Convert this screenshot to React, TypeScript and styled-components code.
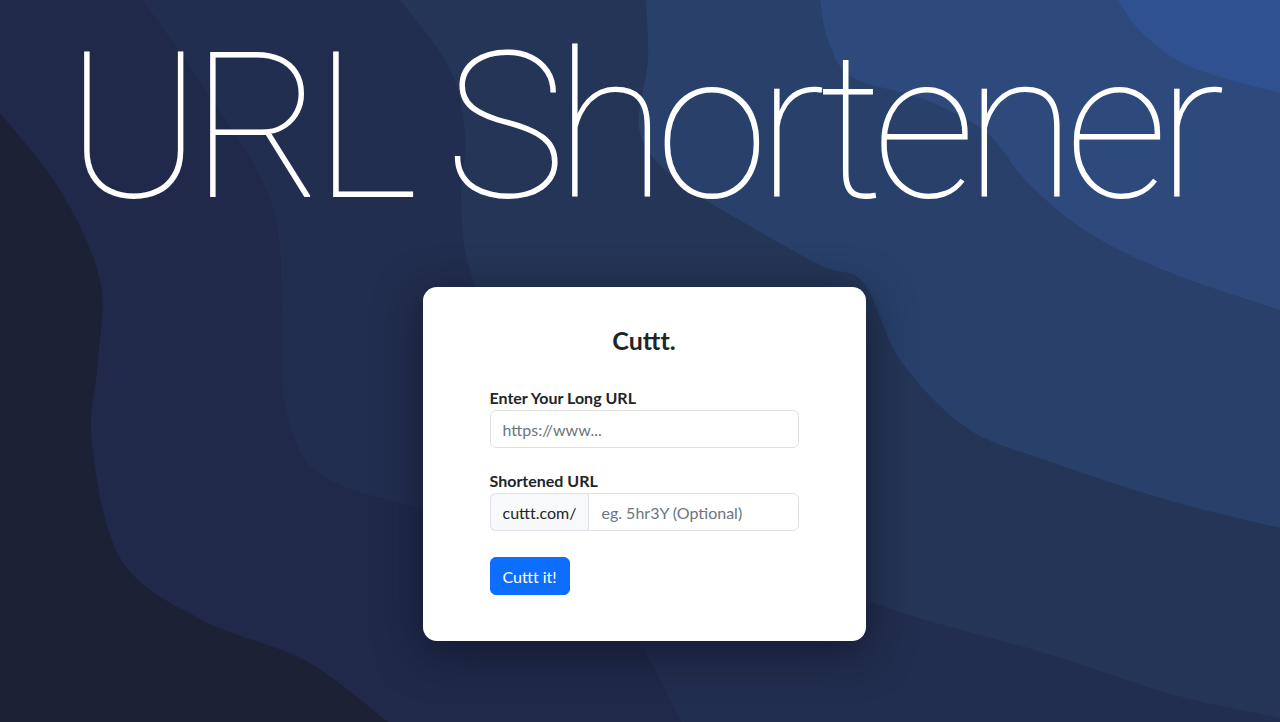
import React from "react";
import styled, { createGlobalStyle } from "styled-components";

const GlobalStyle = createGlobalStyle`
  html, body { margin: 0; padding: 0; height: 100%; overflow: hidden; }
  body { background: #1c2135; font-family: "Lato", "Noto Sans", sans-serif; }
  * { box-sizing: border-box; }
`;

type Pt = [number, number];

function smooth(points: Pt[]): string {
  let d = `M${points[0][0]},${points[0][1]}`;
  for (let i = 0; i < points.length - 1; i++) {
    const p0 = points[i - 1] || points[i];
    const p1 = points[i];
    const p2 = points[i + 1];
    const p3 = points[i + 2] || p2;
    const c1x = p1[0] + (p2[0] - p0[0]) / 6;
    const c1y = p1[1] + (p2[1] - p0[1]) / 6;
    const c2x = p2[0] - (p3[0] - p1[0]) / 6;
    const c2y = p2[1] - (p3[1] - p1[1]) / 6;
    d += ` C${c1x},${c1y} ${c2x},${c2y} ${p2[0]},${p2[1]}`;
  }
  return d;
}

const layers: { color: string; curve: Pt[]; close: string }[] = [
  {
    color: "#20294a",
    curve: [[0, 113], [60, 190], [100, 280], [98, 361], [92, 444], [122, 561], [204, 621], [306, 661], [388, 722]],
    close: " L1280,722 L1280,0 L0,0 Z",
  },
  {
    color: "#222e4f",
    curve: [[143, 0], [245, 150], [278, 233], [282, 361], [286, 411], [306, 461], [347, 488], [424, 511], [520, 560], [600, 610], [640, 644], [681, 722]],
    close: " L1280,722 L1280,0 Z",
  },
  {
    color: "#253557",
    curve: [[400, 0], [449, 67], [465, 133], [461, 200], [469, 267], [500, 330], [600, 430], [700, 520], [869, 601], [1048, 654], [1171, 694], [1280, 718]],
    close: " L1280,0 Z",
  },
  {
    color: "#28406a",
    curve: [[646, 0], [648, 60], [640, 133], [681, 183], [762, 233], [824, 267], [864, 283], [901, 361], [967, 428], [1048, 461], [1171, 501], [1280, 528]],
    close: " L1280,0 Z",
  },
  {
    color: "#2e4a7c",
    curve: [[820, 0], [828, 40], [852, 77], [926, 100], [987, 133], [1028, 183], [1089, 233], [1171, 273], [1280, 310]],
    close: " L1280,0 Z",
  },
  {
    color: "#2f5190",
    curve: [[1118, 0], [1142, 33], [1191, 67], [1280, 93]],
    close: " L1280,0 Z",
  },
];

const Page = styled.div`
  position: relative;
  width: 100vw;
  height: 100vh;
  display: flex;
  flex-direction: column;
  align-items: center;
  overflow: hidden;
`;

const Backdrop = styled.svg`
  position: absolute;
  inset: 0;
  width: 100%;
  height: 100%;
  z-index: 0;
`;

const Content = styled.main`
  position: relative;
  z-index: 1;
  display: flex;
  flex-direction: column;
  align-items: center;
  width: 100%;
`;

const Title = styled.h1`
  margin: 0;
  padding-top: 10px;
  font-family: "Roboto", sans-serif;
  font-weight: 100;
  font-size: 204px;
  line-height: 236px;
  color: #ffffff;
  white-space: nowrap;
  letter-spacing: -11px;
`;

const Card = styled.section`
  margin: 41px 0 0 8px;
  width: 443px;
  background: #ffffff;
  border-radius: 14px;
  padding: 36px 67px 46px;
  box-shadow: 0 10px 45px rgba(12, 15, 30, 0.65);
  display: flex;
  flex-direction: column;
`;

const Brand = styled.h2`
  margin: 0 0 30px;
  text-align: center;
  font-size: 25px;
  line-height: 34px;
  font-weight: 700;
  color: #212529;
`;

const Field = styled.div`
  display: flex;
  flex-direction: column;
  margin-bottom: 22px;
`;

const Label = styled.label`
  font-size: 16px;
  font-weight: 700;
  color: #212529;
  line-height: 22px;
  margin-bottom: 1px;
`;

const Input = styled.input<{ $joined?: boolean }>`
  height: 38px;
  width: 100%;
  padding: 6px 12px;
  font-family: inherit;
  font-size: 16px;
  color: #212529;
  background: #ffffff;
  border: 1px solid #dee2e6;
  border-radius: ${(p) => (p.$joined ? "0 6px 6px 0" : "6px")};
  outline: none;
  &::placeholder { color: #6c757d; }
`;

const Group = styled.div`
  display: flex;
`;

const Addon = styled.span`
  display: flex;
  align-items: center;
  height: 38px;
  padding: 0 12px;
  font-size: 16px;
  color: #212529;
  background: #f8f9fa;
  border: 1px solid #dee2e6;
  border-right: none;
  border-radius: 6px 0 0 6px;
  white-space: nowrap;
`;

const Button = styled.button`
  align-self: flex-start;
  margin-top: 4px;
  height: 38px;
  padding: 0 12px;
  font-family: inherit;
  font-size: 16px;
  color: #ffffff;
  background: #0d6efd;
  border: 1px solid #0d6efd;
  border-radius: 6px;
  cursor: pointer;
`;

export default function App() {
  return (
    <>
      <GlobalStyle />
      <Page>
        <Backdrop viewBox="0 0 1280 722" preserveAspectRatio="none" aria-hidden>
          <rect width="1280" height="722" fill="#1c2135" />
          {layers.map((l, i) => (
            <path key={i} d={smooth(l.curve) + l.close} fill={l.color} />
          ))}
        </Backdrop>
        <Content>
          <Title>URL Shortener</Title>
          <Card>
            <Brand>Cuttt.</Brand>
            <Field>
              <Label htmlFor="long">Enter Your Long URL</Label>
              <Input id="long" placeholder="https://www..." />
            </Field>
            <Field>
              <Label htmlFor="short">Shortened URL</Label>
              <Group>
                <Addon>cuttt.com/</Addon>
                <Input id="short" $joined placeholder="eg. 5hr3Y (Optional)" />
              </Group>
            </Field>
            <Button type="button">Cuttt it!</Button>
          </Card>
        </Content>
      </Page>
    </>
  );
}
